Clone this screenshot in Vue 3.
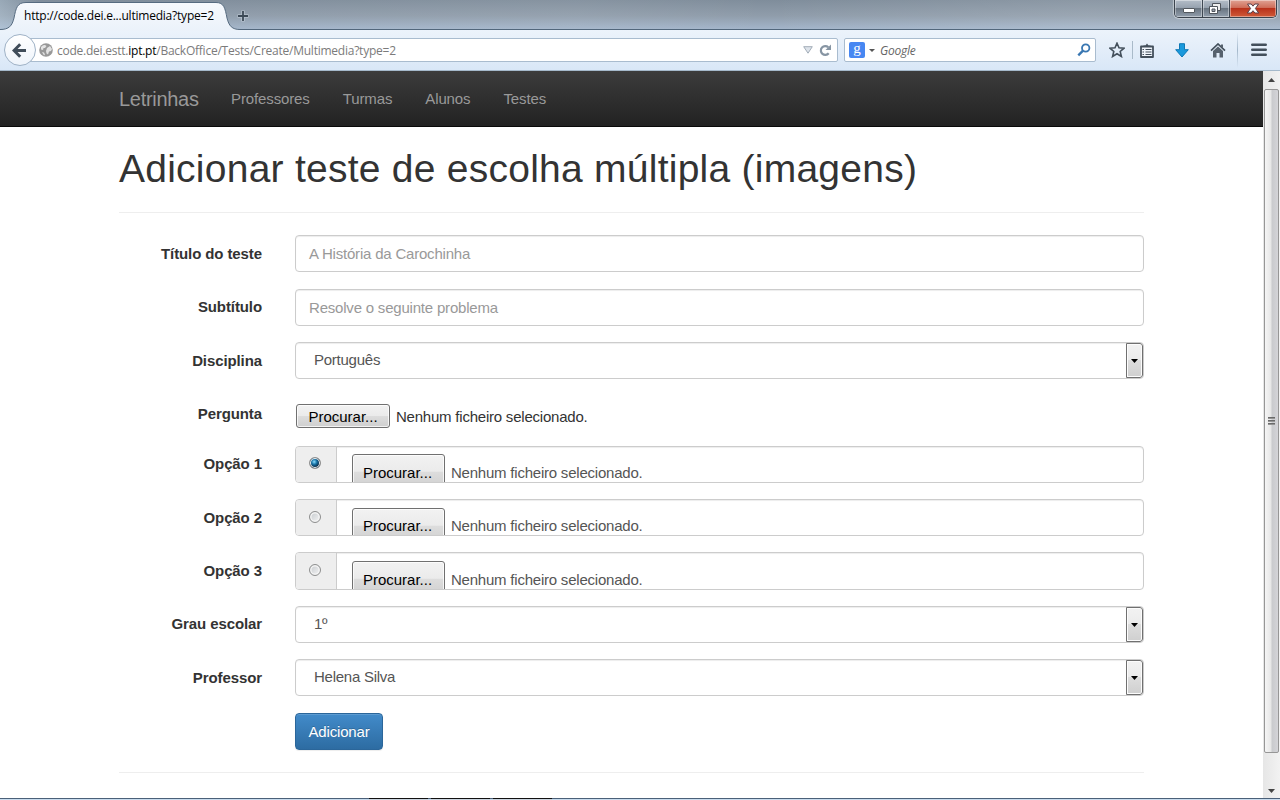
<script setup>
const links = ['Professores', 'Turmas', 'Alunos', 'Testes']
const rows = [
  { label: 'Título do teste', type: 'text', placeholder: 'A História da Carochinha' },
  { label: 'Subtítulo', type: 'text', placeholder: 'Resolve o seguinte problema', up: true },
  { label: 'Disciplina', type: 'select', value: 'Português' },
  { label: 'Pergunta', type: 'file' },
  { label: 'Opção 1', type: 'option', checked: true, up: true },
  { label: 'Opção 2', type: 'option', low: true },
  { label: 'Opção 3', type: 'option', low: true, tall: true },
  { label: 'Grau escolar', type: 'select', value: '1º', up: true },
  { label: 'Professor', type: 'select', value: 'Helena Silva' },
]
</script>

<template>
  <div class="window">
    <header class="titlebar">
      <svg class="tab-shape" width="250" height="31" viewBox="0 0 250 31">
        <defs>
          <linearGradient id="tabFill" x1="0" y1="0" x2="0" y2="1">
            <stop offset="0" stop-color="#f6f9fd" />
            <stop offset="1" stop-color="#ebf2fa" />
          </linearGradient>
        </defs>
        <path d="M0 29.5C9 29.5 12 26 14 18C16 8 17 2.500 26 2.500H216C224 2.500 225 8 227 18C229 26 232 29.500 240 29.500V31H0Z" fill="url(#tabFill)" />
        <path d="M0 29.5C9 29.5 12 26 14 18C16 8 17 2.500 26 2.500H216C224 2.500 225 8 227 18C229 26 232 29.500 240 29.500" fill="none" stroke="#566b80" />
      </svg>
      <span class="tab-title">http://code.dei.e...ultimedia?type=2</span>
      <svg class="new-tab" width="12" height="12" viewBox="0 0 12 12"><path d="M6 .5v11M.5 6h11" stroke="#dbe4ed" stroke-width="3.500" opacity=".5" /><path d="M6 1v10M1 6h10" stroke="#3d4a57" stroke-width="1.800" /></svg>
      <div class="win-buttons">
        <span class="wb min"><svg width="12" height="6" viewBox="0 0 12 6"><rect x=".5" y=".5" width="11" height="4" rx=".5" fill="#fff" stroke="#53585e" /></svg></span>
        <span class="wb max"><svg width="14" height="13" viewBox="0 0 14 13"><path d="M4.500 1.500h8v7h-8z" fill="#eee" stroke="#50555c" /><path d="M1.500 4.500h8v7h-8z" fill="#fff" stroke="#50555c" /><path d="M4 7h3v2.500H4z" fill="#9ba4af" stroke="#50555c" /></svg></span>
        <span class="wb close"><svg width="14" height="12" viewBox="0 0 14 12"><path d="M1.500 1h3.700L7 3.200 8.800 1h3.700L9.400 5.500l3.300 4.500H8.900L7 7.700 5.100 10H1.300l3.300-4.500z" fill="#fff" stroke="#5b3f49" stroke-width="1" /></svg></span>
      </div>
    </header>

    <div class="toolbar">
      <div class="url-bar">
        <svg class="globe" width="14" height="14" viewBox="0 0 14 14"><circle cx="7" cy="7" r="6.800" fill="#989898" /><path d="M2 4Q4 1.500 6 2L7.500 3 6 5 4.500 5 4 7 2 6.500zM8 5l3-2 2 3-1 2-2 .5-1 3-1.500-1L7 8zM3 9l2 .5 1 2-1 1z" fill="#e3e3e3" /></svg>
        <span class="url">code.dei.estt.<b>ipt.pt</b>/BackOffice/Tests/Create/Multimedia?type=2</span>
        <svg class="drop" width="10" height="8" viewBox="0 0 10 8"><path d="M.7.700h8.600L5 7.200z" fill="#dde3ea" stroke="#a3adb8" /></svg>
        <svg class="reload" width="13" height="13" viewBox="0 0 13 13"><path d="M9.700 9.300A4.400 4.400 0 1 1 9.300 3.300" fill="none" stroke="#8795a3" stroke-width="2.200" /><path d="M12 .5V6H6.500z" fill="#8795a3" /></svg>
      </div>
      <div class="back"><svg width="15" height="15" viewBox="0 0 15 15"><path d="M8.200 1.300 2 7.500l6.200 6.200M2.500 7.500H14" fill="none" stroke="#404d5a" stroke-width="3" /></svg></div>
      <div class="search-bar">
        <span class="g-logo">g</span>
        <svg class="caret" width="6" height="3" viewBox="0 0 6 3"><path d="M0 0h6L3 3z" fill="#555" /></svg>
        <span class="search-text">Google</span>
        <svg class="lens" width="14" height="14" viewBox="0 0 14 14"><circle cx="8.700" cy="5" r="3.700" fill="none" stroke="#3977b2" stroke-width="1.800" /><path d="M6 7.700 1.300 12.400" stroke="#3977b2" stroke-width="2.400" /></svg>
      </div>
      <div class="tools">
        <svg class="t-star" width="16" height="16" viewBox="0 0 16 16"><path d="M8 1.200l2 4.600 5 .4-3.800 3.300 1.200 5L8 11.800l-4.400 2.700 1.200-5L1 6.200l5-.4z" fill="none" stroke="#434f5b" stroke-width="1.600" /></svg>
        <i class="sep-small"></i>
        <svg class="t-list" width="14" height="15" viewBox="0 0 14 15"><path d="M1 3.500h12v10.500H1z" fill="#f0f5fb" stroke="#434f5b" stroke-width="1.800" stroke-linejoin="round" /><path d="M3.500 4V2.500H5.500L7 .5 8.500 2.500h2V4z" fill="#434f5b" /><path d="M5.500 6.500h6M5.500 9h6M5.500 11.500h6M2.500 6.500h1.500M2.500 9h1.500M2.500 11.500h1.500" stroke="#434f5b" stroke-width="1.100" /></svg>
        <svg class="t-down" width="14" height="15" viewBox="0 0 14 15"><path d="M4.500.7h5v6h3.800L7 14 .7 6.700h3.800z" fill="#1a99dc" stroke="#0d78b5" /></svg>
        <svg class="t-home" width="16" height="15" viewBox="0 0 16 15"><path d="M1 7.600 8 1l7 6.600" fill="none" stroke="#434f5b" stroke-width="1.700" /><path d="M11 1.500h2v4l-2-2zM3 8l5-4.600L13 8v6.500H9.500V10h-3v4.500H3z" fill="#56616d" /></svg>
        <i class="sep-large"></i>
        <svg class="t-menu" width="16" height="14" viewBox="0 0 16 14"><path d="M1.300 1.700h13.400M1.300 6.700h13.400M1.300 11.700h13.400" stroke="#434f5b" stroke-width="2.600" stroke-linecap="round" /></svg>
      </div>
    </div>

    <div class="viewport">
      <main class="page">
        <nav class="navbar">
          <span class="brand">Letrinhas</span>
          <span v-for="l in links" :key="l" class="nav-link">{{ l }}</span>
        </nav>
        <div class="container">
          <h1>Adicionar teste de escolha múltipla (imagens)</h1>
          <form class="form" @submit.prevent>
            <div v-for="r in rows" :key="r.label" class="row" :class="{ tall: r.tall }">
              <label :class="{ up: r.up }">{{ r.label }}</label>
              <div v-if="r.type === 'text'" class="control placeholder">{{ r.placeholder }}</div>
              <div v-else-if="r.type === 'select'" class="control select">
                <span>{{ r.value }}</span>
                <span class="arrow"><svg width="7" height="4" viewBox="0 0 7 4"><path d="M0 0h7L3.500 4z" fill="#000" /></svg></span>
              </div>
              <div v-else-if="r.type === 'file'" class="file">
                <span class="browse">Procurar...</span><span class="status">Nenhum ficheiro selecionado.</span>
              </div>
              <div v-else class="control option" :class="{ low: r.low }">
                <span class="addon"><i class="radio" :class="{ on: r.checked }"></i></span>
                <span class="browse">Procurar...</span><span class="status none">Nenhum ficheiro selecionado.</span>
              </div>
            </div>
            <button class="submit">Adicionar</button>
          </form>
        </div>
      </main>
      <aside class="scrollbar">
        <svg class="up-arrow" width="7" height="4" viewBox="0 0 7 4"><path d="M0 4h7L3.500 0z" fill="#444" /></svg>
        <div class="thumb"><i></i><i></i><i></i></div>
        <svg class="down-arrow" width="7" height="4" viewBox="0 0 7 4"><path d="M0 0h7L3.500 4z" fill="#444" /></svg>
      </aside>
    </div>
    <footer class="edge"><i class="e1"></i><i class="e2"></i><i class="e3"></i></footer>
  </div>
</template>

<style>
html, body { margin: 0; overflow: hidden; background: #fff; }
</style>

<style scoped>
* { box-sizing: border-box; }
svg { display: block; flex: none; }
.window { width: 1280px; height: 800px; display: flex; flex-direction: column; overflow: hidden; font-family: "Liberation Sans", Arial, sans-serif; font-size: 15px; line-height: 20px; color: #333; }

.titlebar { position: relative; z-index: 1; flex: none; height: 30px; border-bottom: 1px solid #52677c; background: linear-gradient(90deg, rgba(200,220,235,.35), rgba(255,255,255,0) 3%, rgba(255,255,255,.06) 45%, rgba(255,255,255,0) 60%, rgba(255,255,255,.1) 85%, rgba(255,255,255,.08)), linear-gradient(#7f8d9b, #909dab 55%, #a3b5ca); }
.tab-shape { position: absolute; left: 0; top: 0; }
.tab-title { position: absolute; left: 24px; top: 6px; font: 12px/20px "Open Sans", "Noto Sans", sans-serif; letter-spacing: -.22px; color: #000; white-space: nowrap; }
.new-tab { position: absolute; left: 237px; top: 10px; }
.win-buttons { position: absolute; right: 3px; top: 0; height: 18px; width: 103px; display: flex; border: 1px solid #3b434d; border-top: 0; border-radius: 0 0 5px 5px; box-shadow: 0 0 1px 1px rgba(255,255,255,.45); overflow: hidden; }
.wb { display: flex; justify-content: center; align-items: flex-start; box-shadow: inset 0 0 0 1px rgba(255,255,255,.4); background: linear-gradient(#b4bdc8, #98a3b0 44%, #68737f 48%, #929eac); }
.min { width: 28px; padding-top: 8px; border-right: 1px solid #3f4853; }
.max { width: 27px; padding: 2px 3px 0 0; border-right: 1px solid #3f4853; }
.close { flex: 1; padding: 3px 0 0; background: linear-gradient(#e0a294, #cf6f5b 44%, #b8301a 48%, #d05a38); }

.toolbar { position: relative; flex: none; height: 41px; display: flex; align-items: flex-start; padding: 8px 0 0 5px; background: linear-gradient(#ecf3fb, #d9e7f7); border-bottom: 1px solid #a5b9cb; }
.url-bar { width: 814px; height: 24px; margin-left: 19px; padding: 0 5px 0 14px; display: flex; align-items: center; background: #fff; border: 1px solid #a9bccf; border-radius: 2px; }
.back { position: absolute; left: 4px; top: 4px; width: 32px; height: 32px; padding-right: 1px; display: flex; align-items: center; justify-content: center; border: 1px solid #9fb2c6; border-radius: 50%; background: linear-gradient(#fff, #eef4fb); }
.url { margin-left: 4px; padding-top: 2px; font: 12px/20px "Open Sans", "Noto Sans", sans-serif; letter-spacing: -.24px; color: #7b7b7b; white-space: nowrap; }
.url b { font-weight: 400; color: #000; }
.drop { margin-left: auto; margin-right: 6px; }
.search-bar { width: 252px; height: 24px; margin-left: 6px; padding: 0 4px; display: flex; align-items: center; background: #fff; border: 1px solid #a9bccf; border-radius: 2px; }
.g-logo { width: 16px; height: 16px; border-radius: 2px; background: #4787f2; color: #fff; text-align: center; font: 15px/12px "Liberation Serif", serif; }
.caret { margin: 0 5px 0 4px; }
.search-text { padding-top: 2px; font: italic 12px/20px "Open Sans", "Noto Sans", sans-serif; letter-spacing: -.25px; color: #666; }
.lens { margin-left: auto; }
.tools { display: flex; height: 24px; align-items: center; }
.t-star { margin-left: 13px; }
.sep-small { width: 1px; height: 18px; margin: 0 7px; background: #a9bac9; }
.t-down { margin-left: 21px; }
.t-home { margin-left: 21px; }
.sep-large { width: 1px; height: 36px; margin: 0 13px 0 11px; background: linear-gradient(transparent, #a3b7ca, transparent); }

.viewport { flex: none; height: 727px; display: flex; }
.page { width: 1263px; background: #fff; }
.navbar { height: 56px; padding-left: 119px; display: flex; align-items: center; border-bottom: 1px solid #090909; background: linear-gradient(#3c3c3c, #222); color: #999; white-space: nowrap; }
.brand { width: 112px; font-size: 20px; letter-spacing: -.3px; }
.nav-link { margin-right: 33px; letter-spacing: -.12px; }
.container { width: 1025px; margin-left: 119px; }
h1 { height: 86px; margin: 0; padding-top: 20px; border-bottom: 1px solid #eee; font-weight: 400; font-size: 39px; line-height: 44px; letter-spacing: .25px; white-space: nowrap; }
.form { display: grid; margin-top: 22px; height: 538px; align-content: start; border-bottom: 1px solid #eee; grid-template-rows: 54px 53px 53px 51px 53px 53px 54px 53px 54px 37px; }
.row { display: grid; grid-template-columns: 143px 849px; column-gap: 33px; align-items: start; }
label { padding-top: 9px; font-weight: 700; text-align: right; letter-spacing: -.1px; }
label.up { padding-top: 8px; }
.control { height: 37px; border: 1px solid #ccc; border-radius: 4px; box-shadow: inset 0 1px 1px rgba(0,0,0,.075); background: #fff; color: #555; overflow: hidden; }
.tall .control { height: 38px; }
.placeholder { padding: 8px 13px; color: #999; letter-spacing: -.2px; }
.select { display: flex; justify-content: space-between; padding: 0 0 0 18px; line-height: 34px; letter-spacing: -.25px; }
.arrow { width: 17px; height: 35px; display: flex; align-items: center; justify-content: center; border: 1px solid #707070; border-radius: 0 3px 3px 0; box-shadow: inset 0 0 0 1px #fcfcfc; background: linear-gradient(#f2f2f2, #ebebeb 48%, #ddd 50%, #cfcfcf); }
.browse { flex: none; width: 94px; height: 24px; margin-right: 6px; text-align: center; line-height: 24px; color: #000; border: 1px solid #707070; border-radius: 3px; box-shadow: inset 0 0 0 1px rgba(255,255,255,.75); background: linear-gradient(#f2f2f2, #ebebeb 48%, #ddd 50%, #cfcfcf); }
.status { letter-spacing: -.22px; }
.file { display: flex; padding: 9px 0 0 1px; line-height: 25px; }
.option { display: flex; line-height: 20px; }
.addon { flex: none; width: 41px; height: 36px; margin-right: 15px; padding: 10px 0 0 13px; background: #eee; border-right: 1px solid #ccc; }
.radio { display: block; width: 12px; height: 12px; border: 1px solid #8e8f8f; border-radius: 50%; box-shadow: inset 0 0 0 1.500px #f4f4f4; background: linear-gradient(135deg, #c4c8cc, #f6f6f6); }
.radio.on { box-shadow: inset 0 0 0 1px #f4f4f4; background: radial-gradient(circle at 42% 38%, #8fe0ff, #1874a8 30%, #0b3150 60%); }
.low .radio { margin-top: 1px; }
.option .browse { width: 93px; height: 36px; margin-top: 7px; padding-right: 2px; line-height: 35px; }
.option.low .browse { margin-top: 8px; line-height: 33px; }
.tall .option.low .browse { line-height: 35px; }
.none { padding-top: 16px; }
.tall .none { padding-top: 17px; }
.submit { justify-self: start; width: 88px; height: 37px; margin-left: 176px; padding: 0; border: 1px solid #2b669a; border-radius: 4px; background: linear-gradient(#428bca, #2d6ca2); box-shadow: inset 0 1px 0 rgba(255,255,255,.15), 0 1px 1px rgba(0,0,0,.075); color: #fff; font: 15px/20px "Liberation Sans", Arial, sans-serif; letter-spacing: -.15px; text-shadow: 0 -1px 0 rgba(0,0,0,.2); }

.scrollbar { width: 17px; display: flex; flex-direction: column; align-items: center; padding-top: 7px; background: linear-gradient(90deg, #e6e6e6, #f2f2f2); }
.thumb { flex: none; width: 15px; height: 664px; margin: 7px 0 36px; display: flex; flex-direction: column; align-items: center; justify-content: center; gap: 1px; border: 1px solid #969696; border-radius: 2px; background: linear-gradient(90deg, #f5f5f5, #e6e6e6 48%, #c9cacd 52%, #d4d4d8); }
.thumb i { width: 7px; height: 2px; background: linear-gradient(#555, #aaa); }
.edge { flex: none; height: 2px; display: flex; padding-left: 369px; gap: 3px; border-top: 1px solid #4b6078; background: #c9dcee; }
.edge i { width: 59px; height: 2px; margin-top: -1px; background: linear-gradient(#111 50%, #ccd5df 50%); }
</style>
